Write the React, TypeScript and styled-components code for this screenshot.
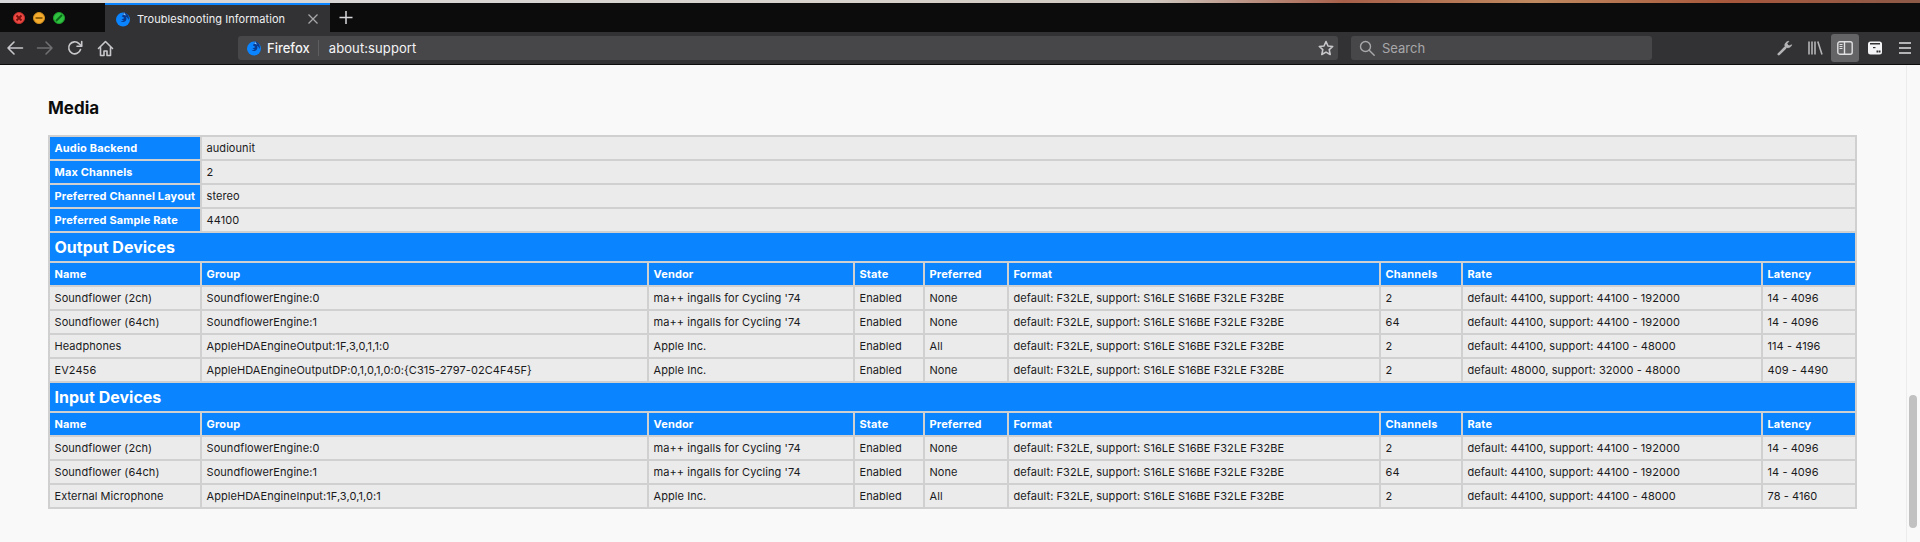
import { createGlobalStyle, styled } from 'styled-components'
import { Fragment } from 'react'

const GlobalStyle = createGlobalStyle`
    html, body {
        margin: 0;
        padding: 0;
        height: 542px;
        overflow: hidden;
        background: #f9f9fa;
        font-family: Inter, "Liberation Sans", sans-serif;
    }
`

const Window = styled.div`
    width: 1920px;
    height: 542px;
    display: flex;
    flex-direction: column;
    overflow: hidden;
`

const DesktopStrip = styled.div`
    height: 3px;
    background: linear-gradient(90deg, #d8d8da 0%, #d8d2cc 45%, #cfc8c0 60%, #a8604a 70%, #c08a60 80%, #a8583c 90%, #8c5a48 100%);
`

const TabBar = styled.div`
    height: 29px;
    background: #0c0c0d;
    display: flex;
    align-items: stretch;
`

const TrafficLights = styled.div`
    width: 105px;
    padding-left: 13px;
    box-sizing: border-box;
    display: flex;
    align-items: center;
    gap: 8px;
`

const Light = styled.span<{ $color: string, $edge: string }>`
    width: 12px;
    height: 12px;
    border-radius: 50%;
    background: ${p => p.$color};
    border: 1px solid ${p => p.$edge};
    box-sizing: border-box;
    display: block;
    svg { display: block; width: 10px; height: 10px; }
`

const Tab = styled.div`
    width: 225px;
    background: #323234;
    border-top: 2px solid #0a84ff;
    box-sizing: border-box;
    display: flex;
    align-items: center;
    padding: 0 12px 0 10px;
    gap: 6px;
    color: #f0f0f2;
    font-size: 11px;
    letter-spacing: 0.05px;
`

const TabTitle = styled.span`
    flex: 1;
`

const Toolbar = styled.div`
    height: 32px;
    background: #323234;
    border-bottom: 1px solid #0c0c0d;
    box-sizing: content-box;
    display: flex;
    align-items: center;
`

const NavGroup = styled.div`
    width: 238px;
    display: flex;
    align-items: center;
`

const NavButton = styled.div`
    width: 30px;
    display: flex;
    align-items: center;
    justify-content: center;
`

const UrlBar = styled.div`
    width: 1100px;
    height: 24px;
    background: #474749;
    border-radius: 3px;
    box-sizing: border-box;
    display: flex;
    align-items: center;
    padding: 0 4px 0 8px;
    color: #f4f4f6;
    font-size: 13px;
    margin-right: 13px;
`

const Identity = styled.div`
    display: flex;
    align-items: center;
    gap: 5px;
    padding-right: 8px;
    margin-right: 10px;
    border-right: 1px solid #5e5e60;
    font-weight: 500;
`

const UrlText = styled.span`
    flex: 1;
    letter-spacing: 0.1px;
`

const SearchBar = styled.div`
    width: 301px;
    height: 24px;
    background: #474749;
    border-radius: 3px;
    box-sizing: border-box;
    display: flex;
    align-items: center;
    gap: 7px;
    padding-left: 8px;
    color: #a8a8aa;
    font-size: 13px;
`

const ToolIcons = styled.div`
    flex: 1;
    display: flex;
    align-items: center;
    justify-content: flex-end;
    gap: 2px;
    padding-right: 1px;
`

const ToolButton = styled.div<{ $active?: boolean }>`
    width: 28px;
    height: 28px;
    border-radius: 3px;
    background: ${p => p.$active ? '#646466' : 'transparent'};
    display: flex;
    align-items: center;
    justify-content: center;
`

const Page = styled.div`
    flex: 1;
    min-height: 0;
    display: flex;
    background: #f9f9fa;
`

const Content = styled.main`
    flex: 1;
    padding: 32px 0 0 48px;
    box-sizing: border-box;
`

const Heading = styled.h2`
    margin: 0 0 16px;
    font-size: 17px;
    line-height: 22px;
    font-weight: 700;
    color: #0c0c0d;
`

const Table = styled.table`
    width: 1809px;
    table-layout: fixed;
    border-collapse: separate;
    border-spacing: 0;
    border-top: 2px solid #d0d0d0;
    border-left: 2px solid #d0d0d0;
    font-size: 11px;
    letter-spacing: 0.07px;
    color: #1a1a1c;
`

const cell = `
    padding: 0 4.5px;
    height: 24px;
    box-sizing: border-box;
    border-right: 2px solid #d0d0d0;
    border-bottom: 2px solid #d0d0d0;
    white-space: nowrap;
    overflow: hidden;
    text-align: left;
`

const Th = styled.th`
    ${cell}
    background: #0a84ff;
    color: #fff;
    font-weight: 700;
    letter-spacing: 0.15px;
`

const Td = styled.td`
    ${cell}
    background: #ebebeb;
`

const SectionTh = styled.th`
    ${cell}
    height: 30px;
    background: #0a84ff;
    color: #fff;
    font-size: 16px;
    font-weight: 700;
    letter-spacing: 0;
`

const ScrollTrack = styled.div`
    width: 14px;
    border-left: 1px solid #ececed;
    box-sizing: border-box;
    background: #f9f9fa;
    position: relative;
`

const ScrollThumb = styled.div`
    position: absolute;
    left: 2px;
    top: 330px;
    width: 8px;
    height: 133px;
    border-radius: 4px;
    background: #c1c1c1;
`

const FirefoxLogo = () => (
    <svg width="16" height="16" viewBox="0 0 16 16">
        <circle cx="8" cy="8.6" r="7" fill="#0a84ff" />
        <path d="M9 1c1.6 1.2 3 1.4 4 3.2 1.2 2 .9 3.6.6 4.8-.5-1.6-1.5-2.6-2.6-3.3.7 1.5.6 3.2-.5 4.3-1.4 1.4-3.7 1.3-5-.2 1.4.6 2.8.1 3.3-.7-1 .3-2-.2-2.2-1 .8.2 2-.4 2.6-1-.6-1-1.6-1.4-2.3-1.4C7.3 4.4 8.6 3.5 9 1z" fill="#0b3a8c" />
        <path d="M9 1c.2 1.6 1.6 2.4 2.4 3.5-1-.5-2.1-.8-3.1-.5C8.7 3.1 9 2 9 1z" fill="#7fc1ff" />
    </svg>
)

const iconStroke = { fill: 'none', stroke: '#c8c8cc', strokeWidth: 1.6, strokeLinecap: 'round', strokeLinejoin: 'round' } as const

const BackIcon = () => (
    <svg width="18" height="18" viewBox="0 0 18 18" {...iconStroke}>
        <path d="M16.5 9H2M8 3 2 9l6 6" />
    </svg>
)

const ForwardIcon = () => (
    <svg width="18" height="18" viewBox="0 0 18 18" {...iconStroke} stroke="#6f6f72">
        <path d="M1.5 9H16M10 3l6 6-6 6" />
    </svg>
)

const ReloadIcon = () => (
    <svg width="16" height="16" viewBox="0 0 16 16" {...iconStroke}>
        <path d="M13.5 9.5A6 6 0 1 1 12 3.6L14.5 6" />
        <path d="M14.7 1.5v4.7H10" />
    </svg>
)

const HomeIcon = () => (
    <svg width="17" height="17" viewBox="0 0 17 17" {...iconStroke}>
        <path d="M1.5 8.5 8.5 1.5l7 7" />
        <path d="M3.5 7.5V15.5h3.5v-4.5h3v4.5h3.5V7.5" />
    </svg>
)

const StarIcon = () => (
    <svg width="16" height="16" viewBox="0 0 16 16" {...iconStroke}>
        <path d="M8 1.5 10 6l4.7.5-3.5 3.2 1 4.8L8 12.1 3.8 14.5l1-4.8L1.3 6.5 6 6z" />
    </svg>
)

const SearchIcon = () => (
    <svg width="16" height="16" viewBox="0 0 16 16" fill="none" stroke="#a8a8aa" strokeWidth="1.4" strokeLinecap="round">
        <circle cx="6.5" cy="6.5" r="5" />
        <path d="m10.2 10.2 5 5" />
    </svg>
)

const WrenchIcon = () => (
    <svg width="16" height="16" viewBox="0 0 16 16" fill="none" stroke="#b4b4b6" strokeLinecap="round">
        <path d="M1.8 14.2 8 8" strokeWidth="2.6" />
        <path d="M11.500 1.300A4 4 0 0 0 8 6.500 4 4 0 0 0 14.700 4.800L12 6 10 4z" fill="#b4b4b6" strokeWidth=".8" strokeLinejoin="round" />
    </svg>
)

const LibraryIcon = () => (
    <svg width="15" height="14" viewBox="0 0 15 14" fill="none" stroke="#b4b4b6" strokeWidth="1.6">
        <path d="M1 .5v13M4 .5v13M7 .5v13M9.800 .5 14 13.500" />
    </svg>
)

const SidebarIcon = () => (
    <svg width="16" height="14" viewBox="0 0 16 14" fill="none" stroke="#e0e0e2" strokeWidth="1.4">
        <rect x=".8" y=".8" width="14.4" height="12.4" rx="2" />
        <path d="M7.5 1v12" />
        <path d="M2.5 3.5h3M2.5 5.500h3M2.500 7.500h3" strokeWidth="1" />
    </svg>
)

const ContainerIcon = () => (
    <svg width="14" height="14" viewBox="0 0 14 14">
        <rect x="0" y=".5" width="14" height="13" rx="2.5" fill="#f4f4f6" />
        <rect x="2" y="2" width="10" height="1.5" fill="#323234" />
        <rect x="5" y="6" width="2.5" height="1.2" fill="#323234" />
        <rect x="8.5" y="9.5" width="2" height="2" fill="#323234" />
        <rect x="11" y="9.5" width="1.5" height="2" fill="#323234" />
    </svg>
)

const MenuIcon = () => (
    <svg width="12" height="14" viewBox="0 0 12 14" stroke="#b4b4b6" strokeWidth="2">
        <path d="M0 2h12M0 7h12M0 12h12" />
    </svg>
)

const columns = [152, 447, 206, 70, 84, 372, 82, 300, 94]
const deviceHeader = ['Name', 'Group', 'Vendor', 'State', 'Preferred', 'Format', 'Channels', 'Rate', 'Latency']

const fmt = 'default: F32LE, support: S16LE S16BE F32LE F32BE'
const cycling = "ma++ ingalls for Cycling '74"

const properties = [
    ['Audio Backend', 'audiounit'],
    ['Max Channels', '2'],
    ['Preferred Channel Layout', 'stereo'],
    ['Preferred Sample Rate', '44100'],
]

const outputDevices = [
    ['Soundflower (2ch)', 'SoundflowerEngine:0', cycling, 'Enabled', 'None', fmt, '2', 'default: 44100, support: 44100 - 192000', '14 - 4096'],
    ['Soundflower (64ch)', 'SoundflowerEngine:1', cycling, 'Enabled', 'None', fmt, '64', 'default: 44100, support: 44100 - 192000', '14 - 4096'],
    ['Headphones', 'AppleHDAEngineOutput:1F,3,0,1,1:0', 'Apple Inc.', 'Enabled', 'All', fmt, '2', 'default: 44100, support: 44100 - 48000', '114 - 4196'],
    ['EV2456', 'AppleHDAEngineOutputDP:0,1,0,1,0:0:{C315-2797-02C4F45F}', 'Apple Inc.', 'Enabled', 'None', fmt, '2', 'default: 48000, support: 32000 - 48000', '409 - 4490'],
]

const inputDevices = [
    ['Soundflower (2ch)', 'SoundflowerEngine:0', cycling, 'Enabled', 'None', fmt, '2', 'default: 44100, support: 44100 - 192000', '14 - 4096'],
    ['Soundflower (64ch)', 'SoundflowerEngine:1', cycling, 'Enabled', 'None', fmt, '64', 'default: 44100, support: 44100 - 192000', '14 - 4096'],
    ['External Microphone', 'AppleHDAEngineInput:1F,3,0,1,0:1', 'Apple Inc.', 'Enabled', 'All', fmt, '2', 'default: 44100, support: 44100 - 48000', '78 - 4160'],
]

const deviceSections = [
    { title: 'Output Devices', rows: outputDevices },
    { title: 'Input Devices', rows: inputDevices },
]

export default function App() {
    return (
        <Window>
            <GlobalStyle />
            <DesktopStrip />
            <TabBar>
                <TrafficLights>
                    <Light $color="#ec4b45" $edge="#c9302b">
                        <svg viewBox="0 0 10 10" stroke="#7c0f0c" strokeWidth="1.8"><path d="M2.5 2.5l5 5M7.5 2.5l-5 5" /></svg>
                    </Light>
                    <Light $color="#f5ac2e" $edge="#d18f1c">
                        <svg viewBox="0 0 10 10" stroke="#8a5a05" strokeWidth="1.8"><path d="M1.5 5h7" /></svg>
                    </Light>
                    <Light $color="#2fc13f" $edge="#1ea02c">
                        <svg viewBox="0 0 10 10" stroke="#0b6a17" strokeWidth="1.8"><path d="M2 8l6-6" /></svg>
                    </Light>
                </TrafficLights>
                <Tab>
                    <FirefoxLogo />
                    <TabTitle>Troubleshooting Information</TabTitle>
                    <svg width="10" height="10" viewBox="0 0 10 10" stroke="#a8a8aa" strokeWidth="1.3"><path d="M.5.5l9 9M9.5.5l-9 9" /></svg>
                </Tab>
                <svg width="32" height="29" viewBox="0 0 32 29" stroke="#d7d7db" strokeWidth="1.5"><path d="M16 8v13M9.5 14.500h13" /></svg>
            </TabBar>
            <Toolbar>
                <NavGroup>
                    <NavButton><BackIcon /></NavButton>
                    <NavButton><ForwardIcon /></NavButton>
                    <NavButton><ReloadIcon /></NavButton>
                    <NavButton><HomeIcon /></NavButton>
                </NavGroup>
                <UrlBar>
                    <Identity>
                        <FirefoxLogo />
                        Firefox
                    </Identity>
                    <UrlText>about:support</UrlText>
                    <StarIcon />
                </UrlBar>
                <SearchBar>
                    <SearchIcon />
                    Search
                </SearchBar>
                <ToolIcons>
                    <ToolButton><WrenchIcon /></ToolButton>
                    <ToolButton><LibraryIcon /></ToolButton>
                    <ToolButton $active><SidebarIcon /></ToolButton>
                    <ToolButton><ContainerIcon /></ToolButton>
                    <ToolButton><MenuIcon /></ToolButton>
                </ToolIcons>
            </Toolbar>
            <Page>
                <Content>
                    <Heading>Media</Heading>
                    <Table>
                        <colgroup>
                            {columns.map((w, i) => <col key={i} width={w} />)}
                        </colgroup>
                        <tbody>
                            {properties.map(([label, value]) => (
                                <tr key={label}>
                                    <Th>{label}</Th>
                                    <Td colSpan={8}>{value}</Td>
                                </tr>
                            ))}
                            {deviceSections.map(section => (
                                <Fragment key={section.title}>
                                    <tr>
                                        <SectionTh colSpan={9}>{section.title}</SectionTh>
                                    </tr>
                                    <tr>
                                        {deviceHeader.map(h => <Th key={h}>{h}</Th>)}
                                    </tr>
                                    {section.rows.map((row, i) => (
                                        <tr key={i}>
                                            {row.map((value, j) => <Td key={j}>{value}</Td>)}
                                        </tr>
                                    ))}
                                </Fragment>
                            ))}
                        </tbody>
                    </Table>
                </Content>
                <ScrollTrack>
                    <ScrollThumb />
                </ScrollTrack>
            </Page>
        </Window>
    )
}
